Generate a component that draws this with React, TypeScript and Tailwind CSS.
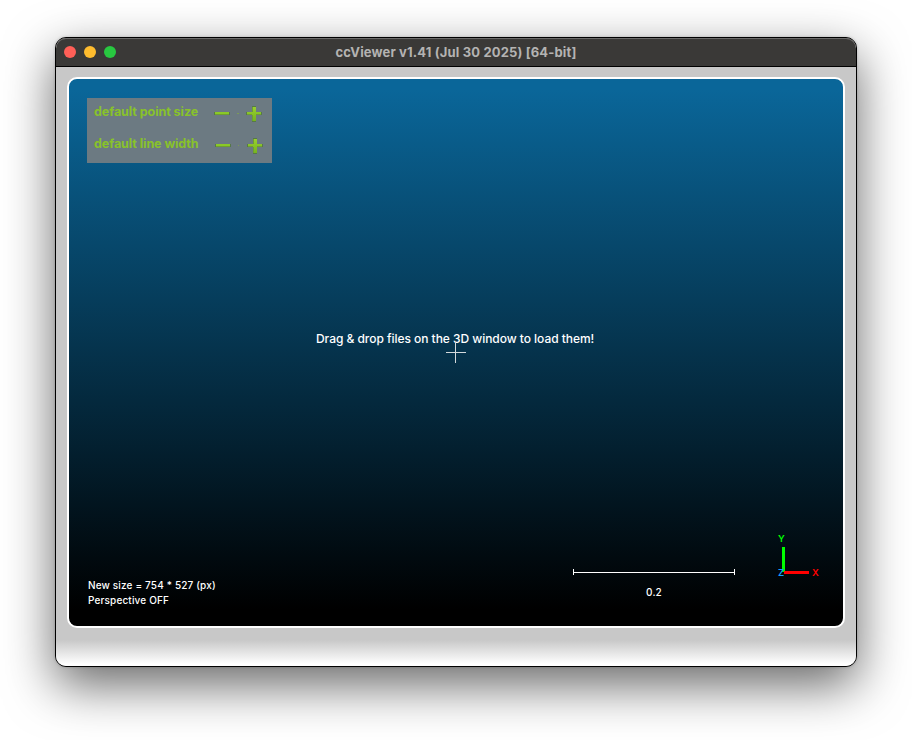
function HotZoneRow({ label, shift }: { label: string; shift: number }) {
  return (
    <div className="flex h-8 items-start">
      <span className="w-[120px] whitespace-nowrap pt-[6px] text-[12.5px] font-bold leading-4 tracking-[-0.06px] text-[#88c22b]">
        {label}
      </span>
      <svg width="52" height="32" viewBox="0 0 52 32" shapeRendering="crispEdges">
        <defs>
          <linearGradient id="leaf" x1="0" y1="0" x2="0" y2="1">
            <stop offset="0" stopColor="#98d02f" />
            <stop offset="1" stopColor="#76b41f" />
          </linearGradient>
        </defs>
        <g transform={`translate(${shift} 0)`}>
          <path d="M0 14h16v3H0z" fill="#567848" />
          <path d="M1 14h14v2H1z" fill="#8ac926" />
          <path d="M1 16h14v1H1z" fill="#6f9f30" />
          <path d="M32 14h16v3H32z M38 8h4v16h-4z" fill="#567848" />
          <path d="M38 9h4v5h5v2h-5v7h-4v-7h-5v-2h5z" fill="url(#leaf)" />
          <path d="M33 16h5v1h-5z M42 16h5v1h-5z M38 9h1v5h-1z M38 17h1v6h-1z" fill="#6f9f30" />
        </g>
        <path d={shift ? "M24 15h1v1h-1z" : "M23 15h2v1h-2z"} fill="#7b9b55" />
      </svg>
    </div>
  );
}

function AxisTrihedron() {
  return (
    <svg className="absolute left-[705px] top-[452px]" width="50" height="50" viewBox="0 0 50 50" shapeRendering="crispEdges">
      <path d="M8 16h3v25H8z" fill="#00ff00" />
      <path d="M10 40h25v3H10z" fill="#ff0000" />
      <g fontFamily="Inter, Roboto, sans-serif" fontSize="9.5" fontWeight="600">
        <text x="4" y="11" fill="#00ff00">Y</text>
        <text x="38" y="45" fill="#ff0000">X</text>
        <text x="4" y="45" fill="#14a0ff">Z</text>
      </g>
    </svg>
  );
}

export default function App() {
  return (
    <main className="h-[740px] w-[912px] overflow-hidden bg-white pl-[55px] pt-[37px] font-['Inter',Roboto,sans-serif]">
      <section className="flex h-[630px] w-[802px] flex-col overflow-hidden rounded-[11px] border border-black bg-[#c8c8c8] shadow-[0_18px_50px_rgba(0,0,0,0.6),0_0_3px_rgba(0,0,0,0.2)]">
        <header className="grid h-[29px] shrink-0 grid-cols-[100px_1fr_100px] items-center rounded-t-[10px] border-b border-black bg-[#3a3937] shadow-[inset_0_1px_0_#6b6a69]">
          <div className="flex gap-2 pl-2">
            <i className="size-3 rounded-full bg-[#ff5f57]" />
            <i className="size-3 rounded-full bg-[#febc2e]" />
            <i className="size-3 rounded-full bg-[#28c840]" />
          </div>
          <h1 className="whitespace-nowrap text-center text-[13px] font-bold leading-4 tracking-[0.15px] text-[#b4b3b2]">
            ccViewer v1.41 (Jul 30 2025) [64-bit]
          </h1>
        </header>
        <div className="flex flex-1 flex-col bg-[linear-gradient(to_bottom,#c8c8c8_0,#c8c8c8_573px,#fff_597px)] px-[11px] pt-[10px]">
          <div className="relative h-[551px] w-[778px] rounded-[10px] border-2 border-white bg-[linear-gradient(to_bottom,#0a6699_2%,#000_97%)] text-white">
            <div className="absolute left-[18px] top-[19px] h-[65px] w-[185px] bg-[#6c7a82] pl-[7px]">
              <HotZoneRow label="default point size" shift={0} />
              <HotZoneRow label="default line width" shift={1} />
            </div>
            <p className="absolute left-[247px] top-[252px] whitespace-nowrap text-[12px] font-medium leading-4 tracking-[-0.04px]">
              Drag &amp; drop files on the 3D window to load them!
            </p>
            <svg className="absolute left-[377px] top-[263px]" width="20" height="21" shapeRendering="crispEdges">
              <path d="M0 10h20v1H0z M9 0h1v21H9z" fill="#d3d9dc" />
            </svg>
            <p className="absolute left-[19px] top-[499px] whitespace-nowrap text-[10px] font-medium leading-[15px] tracking-[0.15px]">
              New size = 754 * 527 (px)
              <br />
              Perspective OFF
            </p>
            <svg className="absolute left-[504px] top-[490px]" width="162" height="6" shapeRendering="crispEdges">
              <path d="M0 0h1v6H0z M161 0h1v6h-1z M0 3h162v1H0z" fill="#fff" />
            </svg>
            <span className="absolute left-[577px] top-[506px] text-[10px] font-medium leading-[15px] tracking-[0.2px]">0.2</span>
            <AxisTrihedron />
          </div>
        </div>
      </section>
    </main>
  );
}
